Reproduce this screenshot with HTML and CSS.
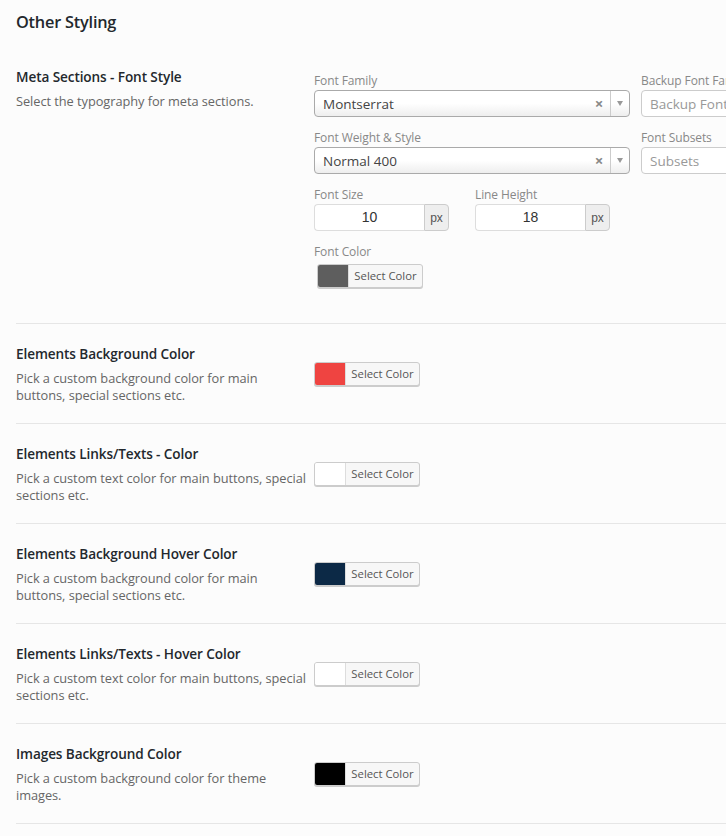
FILE: index.html
```html
<!DOCTYPE html>
<html>
<head>
<meta charset="utf-8">
<link rel="stylesheet" href="styles.css">
</head>
<body>
<div class="panel">
  <h2 class="section-title">Other Styling</h2>

  <div class="row row-first">
    <div class="label-col">
      <div class="row-title">Meta Sections - Font Style</div>
      <div class="row-desc">Select the typography for meta sections.</div>
    </div>
    <div class="field-col">
      <div class="typo-grid">
        <div class="typo-field">
          <div class="field-label">Font Family</div>
          <div class="select">
            <span class="select-value">Montserrat</span>
            <span class="select-clear">×</span>
            <span class="select-arrow"><span class="caret"></span></span>
          </div>
        </div>
        <div class="typo-field">
          <div class="field-label">Backup Font Family</div>
          <div class="select select-empty">
            <span class="select-placeholder">Backup Font Family</span>
          </div>
        </div>
        <div class="typo-field">
          <div class="field-label">Font Weight &amp; Style</div>
          <div class="select">
            <span class="select-value">Normal 400</span>
            <span class="select-clear">×</span>
            <span class="select-arrow"><span class="caret"></span></span>
          </div>
        </div>
        <div class="typo-field">
          <div class="field-label">Font Subsets</div>
          <div class="select select-empty">
            <span class="select-placeholder">Subsets</span>
          </div>
        </div>
      </div>
      <div class="size-row">
        <div class="size-field">
          <div class="field-label">Font Size</div>
          <div class="input-group">
            <span class="num-input">10</span>
            <span class="addon">px</span>
          </div>
        </div>
        <div class="size-field">
          <div class="field-label">Line Height</div>
          <div class="input-group">
            <span class="num-input">18</span>
            <span class="addon">px</span>
          </div>
        </div>
      </div>
      <div class="color-field">
        <div class="field-label">Font Color</div>
        <div class="color-btn"><span class="swatch sw-grey"></span><span class="color-text">Select Color</span></div>
      </div>
    </div>
  </div>

  <div class="row">
    <div class="label-col">
      <div class="row-title">Elements Background Color</div>
      <div class="row-desc">Pick a custom background color for main buttons, special sections etc.</div>
    </div>
    <div class="field-col">
      <div class="color-btn"><span class="swatch sw-red"></span><span class="color-text">Select Color</span></div>
    </div>
  </div>

  <div class="row">
    <div class="label-col">
      <div class="row-title">Elements Links/Texts - Color</div>
      <div class="row-desc">Pick a custom text color for main buttons, special sections etc.</div>
    </div>
    <div class="field-col">
      <div class="color-btn"><span class="swatch sw-white"></span><span class="color-text">Select Color</span></div>
    </div>
  </div>

  <div class="row">
    <div class="label-col">
      <div class="row-title">Elements Background Hover Color</div>
      <div class="row-desc">Pick a custom background color for main buttons, special sections etc.</div>
    </div>
    <div class="field-col">
      <div class="color-btn"><span class="swatch sw-navy"></span><span class="color-text">Select Color</span></div>
    </div>
  </div>

  <div class="row">
    <div class="label-col">
      <div class="row-title">Elements Links/Texts - Hover Color</div>
      <div class="row-desc">Pick a custom text color for main buttons, special sections etc.</div>
    </div>
    <div class="field-col">
      <div class="color-btn"><span class="swatch sw-white"></span><span class="color-text">Select Color</span></div>
    </div>
  </div>

  <div class="row">
    <div class="label-col">
      <div class="row-title">Images Background Color</div>
      <div class="row-desc">Pick a custom background color for theme images.</div>
    </div>
    <div class="field-col">
      <div class="color-btn"><span class="swatch sw-black"></span><span class="color-text">Select Color</span></div>
    </div>
  </div>
</div>
</body>
</html>
```

FILE: styles.css
```css
html, body {
  margin: 0;
  padding: 0;
  background: #fcfcfc;
  overflow: hidden;
}
body {
  font-family: "Open Sans", "Noto Sans", sans-serif;
  color: #23282d;
  width: 726px;
  height: 836px;
}
.panel {
  padding: 0 0 0 16px;
  width: 1000px;
}
.section-title {
  margin: 0;
  padding-top: 10px;
  height: 58px;
  font-size: 16.3px;
  font-weight: 600;
  line-height: 24px;
  color: #23282d;
  letter-spacing: -0.2px;
}
.row {
  display: flex;
  border-bottom: 1px solid #e6e6e6;
  height: 99px;
  box-sizing: content-box;
}
.row-first {
  height: 255px;
}
.label-col {
  width: 298px;
  padding-top: 21px;
  box-sizing: border-box;
  padding-right: 8px;
}
.row-first .label-col {
  padding-top: 0;
}
.row-title {
  font-size: 13.6px;
  font-weight: 600;
  line-height: 18px;
  color: #23282d;
  letter-spacing: -0.1px;
}
.row-desc {
  margin-top: 7px;
  font-size: 12.8px;
  line-height: 17px;
  color: #666;
  letter-spacing: -0.05px;
}
.field-col {
  padding-top: 38px;
}
.row-first .field-col {
  padding-top: 3px;
}
.typo-grid {
  display: grid;
  grid-template-columns: 316px 316px;
  column-gap: 11px;
  row-gap: 11px;
}
.field-label {
  font-size: 12px;
  line-height: 20px;
  color: #888;
  height: 19px;
  letter-spacing: -0.1px;
  white-space: nowrap;
}
.select {
  position: relative;
  height: 27px;
  box-sizing: border-box;
  border: 1px solid #aaa;
  border-radius: 4px;
  background: linear-gradient(to bottom, #ffffff 0%, #ffffff 50%, #eeeeee 100%);
  display: flex;
  align-items: center;
}
.select-value {
  flex: 1;
  padding-left: 8px;
  font-size: 13.5px;
  color: #444;
}
.select-clear {
  width: 18px;
  font-size: 15px;
  font-weight: 700;
  color: #888;
  text-align: center;
  line-height: 25px;
}
.select-arrow {
  width: 18px;
  height: 25px;
  border-left: 1px solid #ccc;
  display: flex;
  align-items: center;
  justify-content: center;
  margin-left: 2px;
}
.caret {
  width: 0;
  height: 0;
  border-left: 3px solid transparent;
  border-right: 3px solid transparent;
  border-top: 5px solid #999;
}
.select-empty {
  background: #fff;
  border-color: #ccc;
}
.select-placeholder {
  padding-left: 8px;
  font-size: 13.5px;
  color: #999;
  white-space: nowrap;
}
.size-row {
  display: flex;
  gap: 26px;
  margin-top: 11px;
}
.input-group {
  display: flex;
  height: 27px;
  width: 135px;
}
.num-input {
  flex: 1;
  box-sizing: border-box;
  border: 1px solid #ddd;
  border-right: none;
  border-radius: 4px 0 0 4px;
  background: #fff;
  text-align: center;
  font-size: 14px;
  line-height: 25px;
  color: #333;
  font-family: "Liberation Sans", sans-serif;
}
.addon {
  width: 25px;
  box-sizing: border-box;
  border: 1px solid #ccc;
  border-radius: 0 4px 4px 0;
  background: #eee;
  text-align: center;
  font-size: 12px;
  line-height: 27px;
  color: #555;
  font-family: "Liberation Sans", sans-serif;
}
.color-field {
  margin-top: 11px;
}
.color-field .color-btn {
  margin-left: 3px;
  margin-top: 3px;
}
.color-btn {
  display: flex;
  width: 106px;
  height: 24px;
  box-sizing: border-box;
  border: 1px solid #ccc;
  border-radius: 3px;
  background: #f7f7f7;
  box-shadow: 0 1px 0 #ccc;
  overflow: hidden;
}
.swatch {
  width: 30px;
  height: 100%;
  border-right: 1px solid #ddd;
}
.sw-grey { background: #5e5e5e; }
.sw-red { background: #ef4441; }
.sw-white { background: #ffffff; }
.sw-navy { background: #0c2946; }
.sw-black { background: #000000; }
.color-text {
  flex: 1;
  text-align: center;
  font-size: 11.3px;
  line-height: 21px;
  color: #555;
}
```
